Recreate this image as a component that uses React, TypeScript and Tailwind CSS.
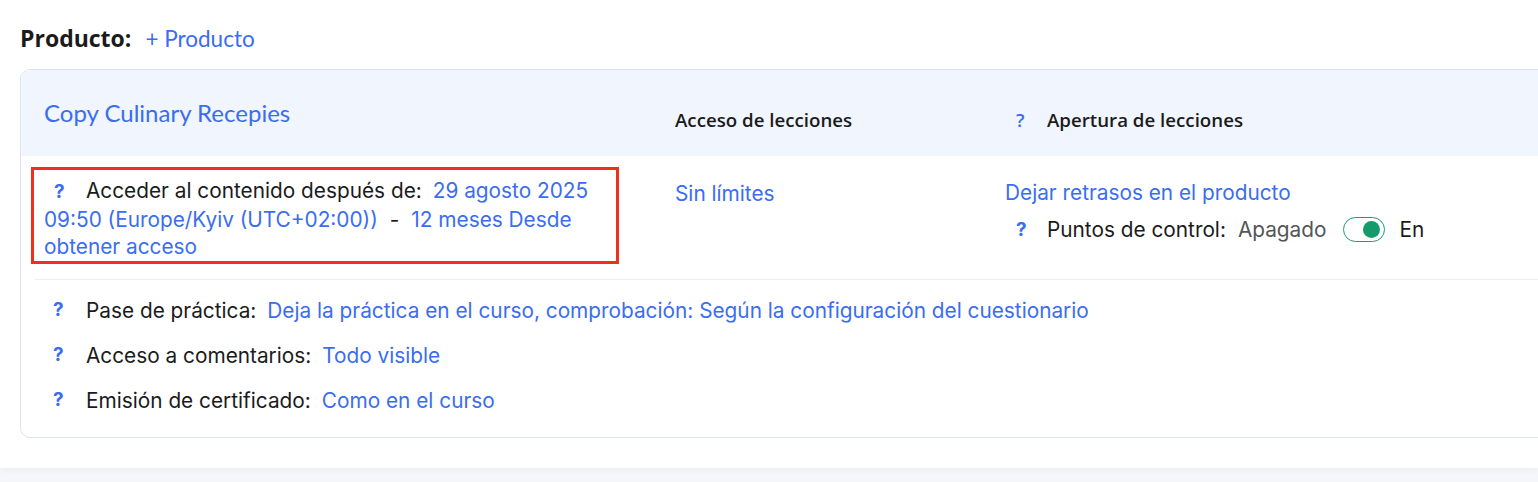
import React from "react";

export default function App() {
  return (
    <div className="w-[1538px] h-[482px] overflow-hidden bg-[#f4f6f9]" style={{ fontFamily: "Inter, 'Noto Sans', sans-serif" }}>
      <div className="bg-white h-[468px] pl-[20px] pt-[21px] shadow-[0_2px_6px_rgba(0,0,0,0.04)]">
        <div className="flex items-baseline gap-[14px] h-[35px]">
          <span className="text-[23px] font-bold text-[#1b1b1b]" style={{ fontFamily: "'Open Sans', sans-serif" }}>Producto:</span>
          <span className="text-[22.5px] text-[#3a6df0]" style={{ fontFamily: "Lato, sans-serif" }}>+ Producto</span>
        </div>
        <div className="mt-[13px] w-[1560px] border border-[#dfe3ee] rounded-[10px] overflow-hidden">
          <div className="bg-[#f1f5fe] h-[86px] flex">
            <div className="w-[654px] pl-[23px] pt-[25px] text-[24px] text-[#3a6df0]" style={{ fontFamily: "Lato, sans-serif" }}>Copy Culinary Recepies</div>
            <div className="w-[330px] pt-[36px] text-[18.7px] font-semibold text-[#1b1b1b]" style={{ fontFamily: "'Open Sans', sans-serif" }}>Acceso de lecciones</div>
            <div className="pt-[36px] flex text-[18.7px] font-semibold text-[#1b1b1b]" style={{ fontFamily: "'Open Sans', sans-serif" }}>
              <span className="w-[42px] pl-[11px] text-[#3a6df0]">?</span>
              <span>Apertura de lecciones</span>
            </div>
          </div>
          <div className="flex h-[124px] border-b border-[#eceef2] ml-[14px] relative">
            <div className="absolute left-[-4px] top-[11px] w-[588px] h-[97px] border-[3px] border-[#f0301a] pointer-events-none" />
            <div className="w-[640px] pl-[9px] pt-[21px] pr-[56px] text-[20.8px] leading-[27.5px] text-[#1b1b1b]">
              <span className="inline-block w-[42px] pl-[10px] text-[#3a6df0] font-bold text-[19px]">?</span>
              <span>Acceder al contenido después de:</span>
              <span className="ml-[11px] text-[#3a6df0]">29 agosto 2025 09:50 (Europe/Kyiv (UTC+02:00))</span>
              <span className="mx-[12px]">-</span>
              <span className="text-[#3a6df0]">12 meses Desde obtener acceso</span>
            </div>
            <div className="w-[330px] pt-[24px] text-[20.8px] leading-[27.5px] text-[#3a6df0]">Sin límites</div>
            <div className="pt-[23px] text-[20.8px] leading-[27.5px]">
              <div className="text-[#3a6df0]">Dejar retrasos en el producto</div>
              <div className="flex items-center mt-[9px]">
                <span className="w-[42px] pl-[11px] text-[#3a6df0] font-bold text-[19px]">?</span>
                <span className="text-[#1b1b1b]">Puntos de control:</span>
                <span className="ml-[12px] text-[#555]">Apagado</span>
                <span className="ml-[16px] w-[42px] h-[25px] rounded-full border border-[#1a9e6e] flex items-center justify-end pr-[4px] bg-white">
                  <span className="w-[17px] h-[17px] rounded-full bg-[#159b6b]" />
                </span>
                <span className="ml-[15px] text-[#1b1b1b]">En</span>
              </div>
            </div>
          </div>
          <div className="pl-[32px] pt-[17px] pb-[23px] text-[20.8px] text-[#1b1b1b] flex flex-col gap-[18px]">
            {[
              ["Pase de práctica:", "Deja la práctica en el curso, comprobación: Según la configuración del cuestionario"],
              ["Acceso a comentarios:", "Todo visible"],
              ["Emisión de certificado:", "Como en el curso"],
            ].map(([l, v]) => (
              <div key={l} className="flex items-center h-[27px]">
                <span className="w-[33px] text-[#3a6df0] font-bold text-[19px]">?</span>
                <span>{l}</span>
                <span className="ml-[11px] text-[#3a6df0]">{v}</span>
              </div>
            ))}
          </div>
        </div>
      </div>
    </div>
  );
}
